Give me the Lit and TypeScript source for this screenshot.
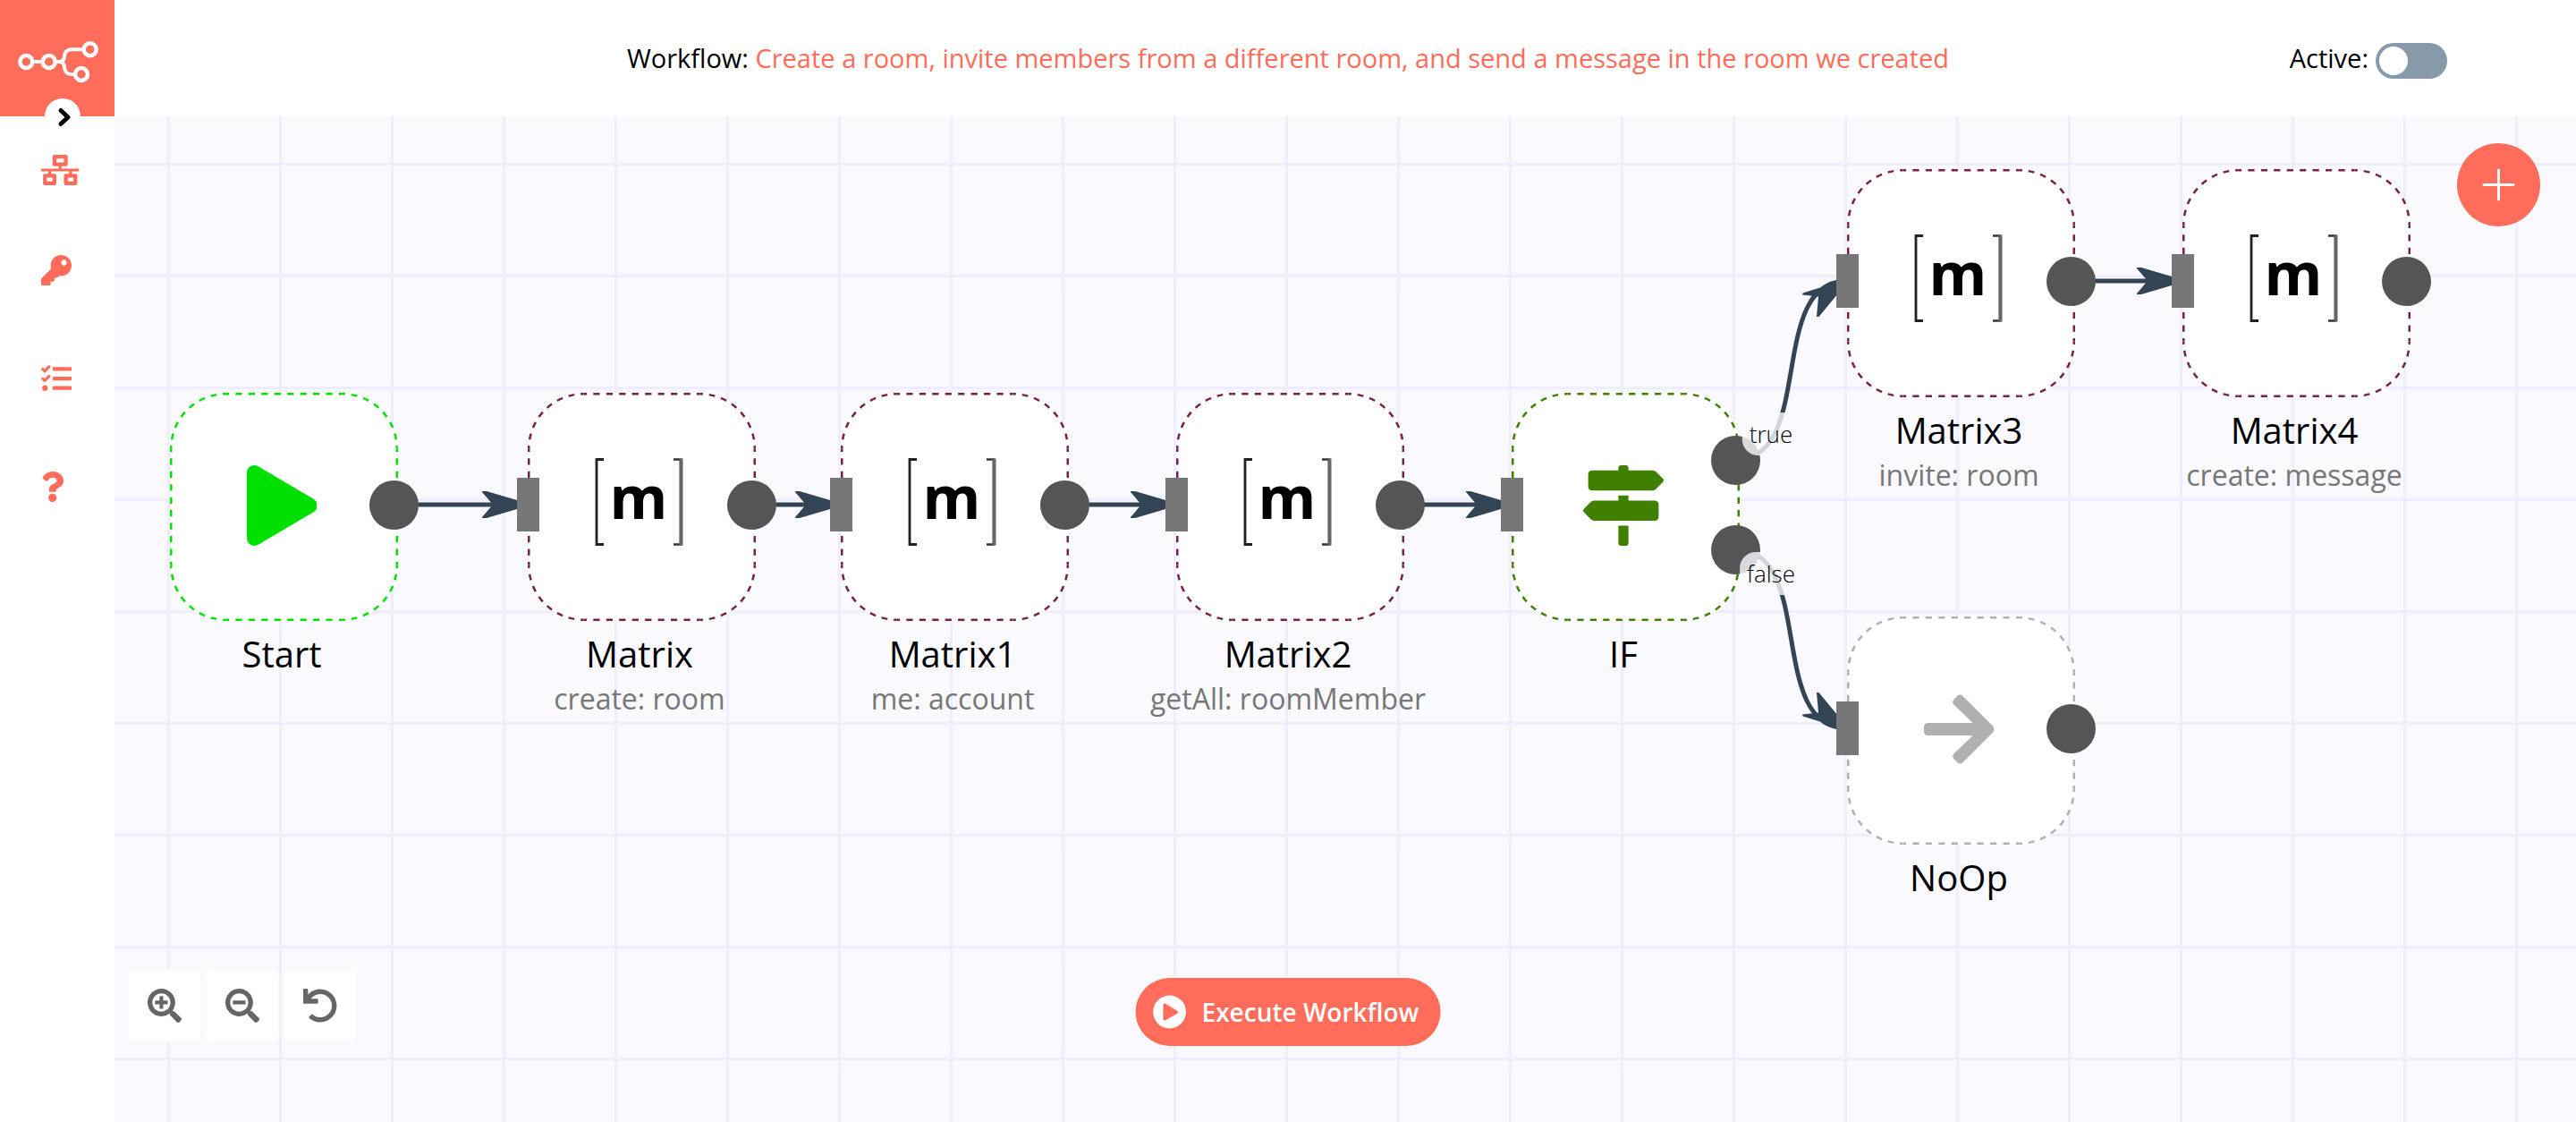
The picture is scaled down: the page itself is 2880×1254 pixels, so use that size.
import { LitElement, html, svg, css, nothing } from "lit";
import { customElement, property } from "lit/decorators.js";

const ICONS: Record<string, [number, string]> = {
  network: [640, "M640 264v-16c0-8.84-7.16-16-16-16H344v-40h72c17.67 0 32-14.33 32-32V32c0-17.67-14.33-32-32-32H224c-17.67 0-32 14.33-32 32v128c0 17.67 14.33 32 32 32h72v40H16c-8.84 0-16 7.16-16 16v16c0 8.84 7.16 16 16 16h104v40H64c-17.67 0-32 14.33-32 32v128c0 17.67 14.33 32 32 32h160c17.67 0 32-14.33 32-32V352c0-17.67-14.33-32-32-32h-56v-40h304v40h-56c-17.67 0-32 14.33-32 32v128c0 17.67 14.33 32 32 32h160c17.67 0 32-14.33 32-32V352c0-17.67-14.33-32-32-32h-56v-40h104c8.84 0 16-7.16 16-16zM256 128V64h128v64H256zm-64 320H96v-64h96v64zm352 0h-96v-64h96v64z"],
  key: [512, "M512 176.001C512 273.203 433.202 352 336 352c-11.22 0-22.19-1.062-32.827-3.069l-24.012 27.014A23.999 23.999 0 0 1 261.223 384H224v40c0 13.255-10.745 24-24 24h-40v40c0 13.255-10.745 24-24 24H24c-13.255 0-24-10.745-24-24v-78.059c0-6.365 2.529-12.47 7.029-16.971l161.802-161.802C163.108 213.814 160 195.271 160 176 160 78.798 238.797.001 335.999 0 433.488-.001 512 78.511 512 176.001zM336 128c0 26.51 21.49 48 48 48s48-21.49 48-48-21.49-48-48-48-48 21.49-48 48z"],
  tasks: [512, "M139.61 35.5a12 12 0 0 0-17 0L58.93 98.81l-22.7-22.12a12 12 0 0 0-17 0L3.53 92.41a12 12 0 0 0 0 17l47.59 47.4a12.78 12.78 0 0 0 17.61 0l15.59-15.62L156.52 69a12.09 12.09 0 0 0 .09-17zm0 159.19a12 12 0 0 0-17 0l-63.68 63.72-22.7-22.1a12 12 0 0 0-17 0L3.53 252a12 12 0 0 0 0 17L51 316.5a12.77 12.77 0 0 0 17.6 0l15.7-15.69 72.2-72.22a12 12 0 0 0 .09-16.9zM64 368c-26.49 0-48.59 21.5-48.59 48S37.53 464 64 464a48 48 0 0 0 0-96zm432 16H208a16 16 0 0 0-16 16v32a16 16 0 0 0 16 16h288a16 16 0 0 0 16-16v-32a16 16 0 0 0-16-16zm0-320H208a16 16 0 0 0-16 16v32a16 16 0 0 0 16 16h288a16 16 0 0 0 16-16V80a16 16 0 0 0-16-16zm0 160H208a16 16 0 0 0-16 16v32a16 16 0 0 0 16 16h288a16 16 0 0 0 16-16v-32a16 16 0 0 0-16-16z"],
  question: [384, "M202.021 0C122.202 0 70.503 32.703 29.914 91.026c-7.363 10.58-5.093 25.086 5.178 32.874l43.138 32.709c10.373 7.865 25.132 6.026 33.253-4.148 25.049-31.381 43.63-49.449 82.757-49.449 30.764 0 68.816 19.799 68.816 49.631 0 22.552-18.617 34.134-48.993 51.164-35.423 19.86-82.299 44.576-82.299 106.405V320c0 13.255 10.745 24 24 24h72.471c13.255 0 24-10.745 24-24v-5.773c0-42.86 125.268-44.645 125.268-160.627C377.504 66.256 286.902 0 202.021 0zM192 373.459c-38.196 0-69.271 31.075-69.271 69.271 0 38.195 31.075 69.27 69.271 69.27s69.271-31.075 69.271-69.271-31.075-69.27-69.271-69.27z"],
  zoomIn: [512, "M304 192v32c0 6.6-5.4 12-12 12h-56v56c0 6.6-5.4 12-12 12h-32c-6.6 0-12-5.4-12-12v-56h-56c-6.6 0-12-5.4-12-12v-32c0-6.6 5.4-12 12-12h56v-56c0-6.6 5.4-12 12-12h32c6.6 0 12 5.4 12 12v56h56c6.6 0 12 5.4 12 12zm201 284.7L476.7 505c-9.4 9.4-24.6 9.4-33.9 0L343 405.3c-4.5-4.5-7-10.6-7-17V372c-35.3 27.6-79.7 44-128 44C93.1 416 0 322.9 0 208S93.1 0 208 0s208 93.1 208 208c0 48.3-16.4 92.7-44 128h16.3c6.4 0 12.5 2.5 17 7l99.7 99.7c9.3 9.4 9.3 24.6 0 34zM344 208c0-75.2-60.8-136-136-136S72 132.8 72 208s60.8 136 136 136 136-60.8 136-136z"],
  zoomOut: [512, "M304 192v32c0 6.6-5.4 12-12 12H124c-6.6 0-12-5.4-12-12v-32c0-6.6 5.4-12 12-12h168c6.6 0 12 5.4 12 12zm201 284.7L476.7 505c-9.4 9.4-24.6 9.4-33.9 0L343 405.3c-4.5-4.5-7-10.6-7-17V372c-35.3 27.6-79.7 44-128 44C93.1 416 0 322.9 0 208S93.1 0 208 0s208 93.1 208 208c0 48.3-16.4 92.7-44 128h16.3c6.4 0 12.5 2.5 17 7l99.7 99.7c9.3 9.4 9.3 24.6 0 34zM344 208c0-75.2-60.8-136-136-136S72 132.8 72 208s60.8 136 136 136 136-60.8 136-136z"],
  undo: [512, "M212.333 224.333H12c-6.627 0-12-5.373-12-12V12C0 5.373 5.373 0 12 0h48c6.627 0 12 5.373 12 12v78.112C117.773 39.279 184.26 7.47 258.175 8.007c136.906.994 246.448 111.623 246.157 248.532C504.041 393.258 393.12 504 256.333 504c-64.089 0-122.496-24.313-166.51-64.215-5.099-4.622-5.334-12.554-.467-17.42l33.967-33.967c4.474-4.474 11.662-4.717 16.401-.525C170.76 415.336 211.58 432 256.333 432c97.268 0 176-78.716 176-176 0-97.267-78.716-176-176-176-58.496 0-110.28 28.476-142.274 72.333h98.274c6.627 0 12 5.373 12 12v48c0 6.627-5.373 12-12 12z"],
  playCircle: [512, "M256 8C119 8 8 119 8 256s111 248 248 248 248-111 248-248S393 8 256 8zm115.7 272l-176 101c-15.8 8.8-35.7-2.5-35.7-21V152c0-18.4 19.8-29.8 35.7-21l176 107c16.4 9.2 16.4 32.9 0 42z"],
  play: [448, "M424.4 214.7L72.4 6.6C43.8-10.3 0 6.1 0 47.9V464c0 37.5 40.7 60.1 72.4 41.3l352-208c31.4-18.5 31.5-64.1 0-82.6z"],
  signs: [512, "M507.31 84.69L464 41.37c-6-6-14.14-9.37-22.63-9.37H288V16c0-8.84-7.16-16-16-16h-32c-8.84 0-16 7.16-16 16v16H56c-13.25 0-24 10.75-24 24v80c0 13.25 10.75 24 24 24h385.37c8.49 0 16.62-3.37 22.63-9.37l43.31-43.31c6.25-6.26 6.25-16.38 0-22.63zM224 496c0 8.84 7.16 16 16 16h32c8.84 0 16-7.16 16-16V384h-64v112zm232-272H288v-32h-64v32H70.63c-8.49 0-16.62 3.37-22.63 9.37L4.69 276.69c-6.25 6.25-6.25 16.38 0 22.63L48 342.63c6 6 14.14 9.37 22.63 9.37H456c13.25 0 24-10.75 24-24v-80c0-13.25-10.75-24-24-24z"],
  arrow: [448, "M190.5 66.9l22.2-22.2c9.4-9.4 24.6-9.4 33.9 0L441 239c9.4 9.4 9.4 24.6 0 33.9L246.6 467.3c-9.4 9.4-24.6 9.4-33.9 0l-22.2-22.2c-9.5-9.5-9.3-25 .4-34.3L311.4 296H24c-13.3 0-24-10.7-24-24v-32c0-13.3 10.7-24 24-24h287.4L190.9 101.2c-9.8-9.3-10-24.8-.4-34.3z"],
};

const icon = (name: string) => {
  const [width, d] = ICONS[name];
  return html`<svg class="icon" viewBox="0 0 ${width} 512" aria-hidden="true"><path fill="currentColor" d=${d}></path></svg>`;
};

interface Output {
  y: number;
  label?: string;
  side?: "above" | "below";
}

interface FlowNode {
  name: string;
  note?: string;
  icon: string;
  color: string;
  x: number;
  y: number;
  input: boolean;
  outputs: Output[];
}

const single: Output[] = [{ y: 125 }];
const MAROON = "#772244";

const NODES: FlowNode[] = [
  { name: "Start", icon: "play", color: "#00e000", x: 62, y: 309, input: false, outputs: single },
  { name: "Matrix", note: "create: room", icon: "matrix", color: MAROON, x: 462, y: 309, input: true, outputs: single },
  { name: "Matrix1", note: "me: account", icon: "matrix", color: MAROON, x: 812, y: 309, input: true, outputs: single },
  { name: "Matrix2", note: "getAll: roomMember", icon: "matrix", color: MAROON, x: 1187, y: 309, input: true, outputs: single },
  {
    name: "IF", icon: "signs", color: "#408000", x: 1562, y: 309, input: true,
    outputs: [{ y: 75, label: "true", side: "above" }, { y: 175, label: "false", side: "below" }],
  },
  { name: "Matrix3", note: "invite: room", icon: "matrix", color: MAROON, x: 1937, y: 59, input: true, outputs: single },
  { name: "Matrix4", note: "create: message", icon: "matrix", color: MAROON, x: 2312, y: 59, input: true, outputs: single },
  { name: "NoOp", icon: "arrow", color: "#b0b0b0", x: 1937, y: 559, input: true, outputs: single },
];

@customElement("flow-node")
class FlowNodeElement extends LitElement {
  @property({ attribute: false }) node!: FlowNode;

  static styles = css`
    :host {
      display: block;
      width: 250px;
      position: relative;
    }
    .box {
      display: grid;
      place-items: center;
      height: 250px;
    }
    .frame {
      position: absolute;
      left: 0;
      top: 0;
      width: 255px;
      height: 255px;
    }
    .glyph {
      display: grid;
      place-items: center;
      position: relative;
      padding-top: 2px;
    }
    .icon {
      height: 90px;
      display: block;
    }
    .matrix {
      width: 100px;
      height: 100px;
      margin: 0 2px 8px 0;
      display: block;
      overflow: visible;
    }
    .matrix-letter {
      font: 700 66px "Open Sans", "Noto Sans", sans-serif;
    }
    .caption {
      display: flex;
      flex-direction: column;
      align-items: center;
      margin-top: 15px;
      white-space: nowrap;
    }
    .name {
      font-size: 40px;
      line-height: 54px;
      color: #000;
    }
    .note {
      font-size: 32px;
      line-height: 46px;
      color: #777;
    }
    .input {
      position: absolute;
      left: -12px;
      top: 95px;
      width: 25px;
      height: 60px;
      background: #777;
    }
    .output {
      position: absolute;
      left: 223px;
      width: 55px;
      height: 55px;
      border-radius: 50%;
      background: #555;
    }
    .branch {
      position: absolute;
      left: 290px;
      transform: translate(-50%, -50%);
      padding: 6px 8px;
      border-radius: 18px;
      background: rgba(250, 249, 254, 0.8);
      font-size: 26px;
      font-weight: 300;
      line-height: 36px;
      color: #000;
    }
  `;

  private frame(color: string) {
    const sides = ["M62.5 1.25H192.5", "M253.75 62.5V192.5", "M192.5 253.75H62.5", "M1.25 192.5V62.5"];
    const corners = [
      "M192.5 1.25A61.25 61.25 0 0 1 253.75 62.5",
      "M253.75 192.5A61.25 61.25 0 0 1 192.5 253.75",
      "M62.5 253.75A61.25 61.25 0 0 1 1.25 192.5",
      "M1.25 62.5A61.25 61.25 0 0 1 62.5 1.25",
    ];
    return html`<svg class="frame" viewBox="0 0 255 255" aria-hidden="true">
      <rect width="255" height="255" rx="62.5" fill="#fff"></rect>
      <g fill="none" stroke=${color} stroke-width="2.5" stroke-dasharray="1 1" stroke-dashoffset="0.5">
        ${sides.map((d) => svg`<path d=${d} pathLength="18"></path>`)}
        ${corners.map((d) => svg`<path d=${d} pathLength="14"></path>`)}
      </g>
    </svg>`;
  }

  private matrix() {
    return html`<svg class="matrix" viewBox="0 0 100 100" role="img" aria-label="Matrix">
      <path d="M11 2.5H3V97.5H11" fill="none" stroke="#222" stroke-width="2.8"></path>
      <path d="M89 2.5H97V97.5H89" fill="none" stroke="#333" stroke-width="2.4"></path>
      <path d="M97.5 1.5V98.5" fill="none" stroke="#666" stroke-width="4"></path>
      <text class="matrix-letter" x="50" y="69" text-anchor="middle">m</text>
    </svg>`;
  }

  render() {
    const n = this.node;
    return html`
      ${this.frame(n.color)}
      <div class="box">
        <div class="glyph" style="color:${n.color === MAROON ? "#000" : n.color}">
          ${n.icon === "matrix" ? this.matrix() : icon(n.icon)}
        </div>
      </div>
      <div class="caption">
        <span class="name">${n.name}</span>
        ${n.note ? html`<span class="note">${n.note}</span>` : nothing}
      </div>
      ${n.input ? html`<span class="input"></span>` : nothing}
      ${n.outputs.map((o) => html`
        <span class="output" style="top:${o.y - 27}px"></span>
        ${o.label ? html`<span class="branch" style="top:${o.side === "above" ? o.y - 29 : o.y + 27}px">${o.label}</span>` : nothing}
      `)}
    `;
  }
}

@customElement("app-root")
class AppRoot extends LitElement {
  static styles = css`
    :host {
      display: block;
      font-family: "Open Sans", "Noto Sans", sans-serif;
      color: #000;
    }
    .app {
      position: relative;
      display: grid;
      grid-template: 130px 1fr / 128px 1fr;
      min-height: 100vh;
      background: #fff;
      overflow: hidden;
    }
    .header {
      grid-column: 1 / -1;
      display: grid;
      grid-template-columns: 1fr auto 1fr;
      align-items: center;
      font-size: 29px;
      line-height: 40px;
    }
    .logo {
      display: block;
      width: 128px;
      height: 130px;
      background: #ff6d5a;
    }
    .logo svg {
      display: block;
    }
    .title {
      margin: 0;
      font-size: 29px;
      font-weight: 400;
    }
    .title a {
      color: #ff6d5a;
      text-decoration: none;
    }
    .active {
      justify-self: end;
      display: flex;
      align-items: center;
      gap: 8px;
      margin-right: 144px;
    }
    .switch {
      appearance: none;
      display: flex;
      align-items: center;
      width: 80px;
      height: 40px;
      margin: 6px 0 0;
      padding: 4px;
      border-radius: 20px;
      background: #8899aa;
    }
    .switch::before {
      content: "";
      width: 32px;
      height: 32px;
      border-radius: 50%;
      background: #fff;
    }
    .switch:checked {
      justify-content: flex-end;
      background: #13ce66;
    }
    button {
      font: inherit;
      border: 0;
      padding: 0;
      cursor: pointer;
    }
    .collapse {
      position: absolute;
      left: 50px;
      top: 110px;
      width: 40px;
      height: 40px;
      border-radius: 50%;
      background: #fff;
    }
    .collapse svg {
      display: block;
    }
    .menu {
      display: flex;
      flex-direction: column;
      padding-top: 9px;
    }
    .menu a {
      display: flex;
      align-items: center;
      height: 121px;
      padding-left: 46px;
      color: #ff6d5a;
    }
    .menu a:first-child {
      height: 102px;
    }
    .menu .icon {
      height: 34px;
    }
    .canvas {
      position: relative;
      overflow: hidden;
      background-color: #faf9fe;
      background-image: linear-gradient(to right, #eeeefe 3px, transparent 3px),
        linear-gradient(to bottom, #eeeefe 3px, transparent 3px);
      background-size: 125px 125px;
      background-position: 59px 52px;
    }
    .links {
      position: absolute;
      left: 0;
      top: 0;
      width: 2752px;
      height: 1124px;
    }
    .node {
      position: absolute;
    }
    .add {
      position: absolute;
      right: 40px;
      top: 160px;
      width: 93px;
      height: 93px;
      display: grid;
      place-items: center;
      border-radius: 50%;
      background: #ff6d5a;
    }
    .zoom {
      position: absolute;
      left: 144px;
      bottom: 90px;
      display: flex;
      gap: 7px;
    }
    .zoom button {
      display: grid;
      place-items: center;
      width: 80px;
      height: 80px;
      border-radius: 6px;
      background: #fff;
      color: #666;
    }
    .zoom .icon {
      height: 38px;
    }
    .execute {
      position: absolute;
      left: 50%;
      bottom: 85px;
      transform: translateX(-50%);
      display: flex;
      align-items: center;
      gap: 17px;
      height: 76px;
      padding: 0 24px 0 19px;
      border-radius: 38px;
      background: #ff6d5a;
      color: #fff;
      font-size: 28px;
      font-weight: 600;
      white-space: nowrap;
    }
    .execute .icon {
      height: 38px;
    }
  `;

  private links() {
    const arrow = (x: number, y: number) =>
      svg`<path d="M${x - 39} ${y - 15}H${x - 34}L${x + 17} ${y}L${x - 34} ${y + 15}H${x - 39}V${y + 14}L${x - 27} ${y}L${x - 39} ${y - 14}Z"></path>`;
    const straight: [number, number, number][] = [
      [312, 450, 434],
      [712, 800, 434],
      [1062, 1175, 434],
      [1437, 1550, 434],
      [2187, 2300, 184],
    ];
    const branchArrow = svg`<path d="M1903 644L1905.5 644L1941 687L1887.5 670.5L1887 668.5L1905 666.5Z"></path>`;
    const branch = svg`<path d="M1812 484C1903 484 1846 684 1937 684" fill="none" stroke="#334455" stroke-width="5"></path>`;
    return html`<svg class="links" viewBox="0 0 2752 1124" fill="#334455" aria-hidden="true">
      ${straight.map(([from, to, y]) => svg`
        <path d="M${from} ${y}H${to - 26}" stroke="#334455" stroke-width="5"></path>
        ${arrow(to, y)}`)}
      <g>${branch}${branchArrow}</g>
      <g transform="matrix(1 0 0 -1 0 868)">${branch}${branchArrow}</g>
    </svg>`;
  }

  render() {
    return html`
      <div class="app">
        <header class="header">
          <a class="logo" href="#home" aria-label="Home">
            <svg width="128" height="130" viewBox="0 0 128 130" fill="none" stroke="#fff" stroke-width="4.5">
              <circle cx="29.3" cy="69" r="7"></circle>
              <circle cx="54.7" cy="69" r="7"></circle>
              <circle cx="100.7" cy="55.2" r="7"></circle>
              <circle cx="91" cy="83" r="7"></circle>
              <path stroke-width="4" d="M37 69H47M62 69H67Q71.5 68.5 72 63Q72.5 55.2 80.5 55.2H93M67 69Q71.500 69.500 72 75Q72.500 83 79.500 83H83.500"></path>
            </svg>
          </a>
          <h1 class="title">Workflow: <a href="#workflow">Create a room, invite members from a different room, and send a message in the room we created</a></h1>
          <div class="active">
            <label for="active">Active:</label>
            <input id="active" class="switch" type="checkbox" role="switch" />
          </div>
        </header>
        <nav class="menu" aria-label="Main">
          <a href="#workflows" aria-label="Workflows">${icon("network")}</a>
          <a href="#credentials" aria-label="Credentials">${icon("key")}</a>
          <a href="#executions" aria-label="Executions">${icon("tasks")}</a>
          <a href="#help" aria-label="Help">${icon("question")}</a>
        </nav>
        <main class="canvas">
          ${this.links()}
          ${NODES.map((n) => html`<flow-node class="node" style="left:${n.x}px;top:${n.y}px" .node=${n}></flow-node>`)}
        </main>
        <button class="collapse" aria-label="Expand menu">
          <svg width="40" height="40" viewBox="0 0 40 40" fill="none" stroke="#000" stroke-width="5" stroke-linecap="round" stroke-linejoin="round">
            <path d="M18 13.500L26 21L18 28.500"></path>
          </svg>
        </button>
        <button class="add" aria-label="Add node">
          <svg width="37" height="37" viewBox="0 0 37 37" stroke="#fff" stroke-width="3" stroke-linecap="round">
            <path d="M2 18.500H35M18.500 2V35"></path>
          </svg>
        </button>
        <div class="zoom">
          <button aria-label="Zoom in">${icon("zoomIn")}</button>
          <button aria-label="Zoom out">${icon("zoomOut")}</button>
          <button aria-label="Reset zoom">${icon("undo")}</button>
        </div>
        <button class="execute">${icon("playCircle")}<span>Execute Workflow</span></button>
      </div>
    `;
  }
}
